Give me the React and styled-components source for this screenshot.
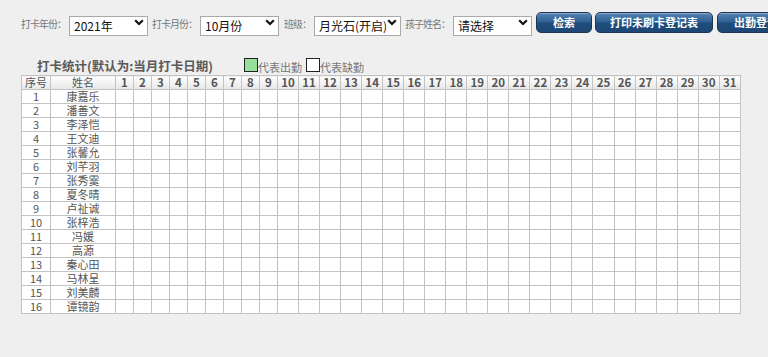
import React from "react";
import styled, { createGlobalStyle } from "styled-components";

const Global = createGlobalStyle`
  html, body { margin: 0; padding: 0; background: #efefef; }
  body { font-family: "Noto Sans CJK SC", "Liberation Sans", sans-serif; }
`;

const Page = styled.div`
  width: 768px;
  height: 357px;
  overflow: hidden;
  background: #efefef;
`;

const Toolbar = styled.div`
  display: flex;
  align-items: center;
  padding: 12px 0 0 21px;
  height: 20px;
  white-space: nowrap;
`;

const Label = styled.span`
  flex: none;
  font-size: 10px;
  letter-spacing: -1px;
  color: #777;
  line-height: 12px;
  margin: 3px 3px 0 ${(p) => p.$gap || 0}px;
`;

const SelectWrap = styled.div`
  position: relative;
  width: ${(p) => p.$w}px;
  height: 20px;
  flex: none;
`;

const Select = styled.select`
  appearance: none;
  -webkit-appearance: none;
  width: 100%;
  height: 100%;
  box-sizing: border-box;
  border: 1px solid #a9a9a9;
  background: #fff;
  font-family: "Noto Sans CJK SC", "Liberation Sans", sans-serif;
  font-size: 12px;
  color: #111;
  padding: 0 8px 0 4px;
  line-height: 18px;
  border-radius: 0;
  outline: none;
`;

const Chevron = styled.svg`
  position: absolute;
  right: 4px;
  top: 7px;
  width: 10px;
  height: 7px;
  pointer-events: none;
`;

const Button = styled.button`
  flex: none;
  height: 21px;
  width: ${(p) => p.$w}px;
  margin-left: ${(p) => p.$gap}px;
  border: 1px solid #1b3553;
  border-radius: 5px;
  background: linear-gradient(#5585b3 0%, #2f6092 45%, #1f4c7a 55%, #1d4775 100%);
  box-shadow: inset 0 1px 0 rgba(255, 255, 255, 0.3);
  color: #fff;
  font-family: "Noto Sans CJK SC", "Liberation Sans", sans-serif;
  font-size: 11px;
  font-weight: bold;
  padding: 0;
  line-height: 19px;
  white-space: nowrap;
  overflow: hidden;
  text-align: ${(p) => (p.$cut ? "left" : "center")};
  padding-left: ${(p) => (p.$cut ? 16 : 0)}px;
`;

const TitleRow = styled.div`
  display: flex;
  align-items: flex-end;
  margin-top: 26px;
  padding-left: 37px;
  height: 16px;
`;

const Title = styled.div`
  font-size: 12.5px;
  font-weight: bold;
  color: #5a5a5a;
  line-height: 16px;
  margin-right: 31px;
`;

const LegendItem = styled.div`
  display: flex;
  align-items: flex-end;
  margin-right: 4px;
`;

const Swatch = styled.span`
  display: inline-block;
  width: 12px;
  height: 12px;
  border: 1px solid #222;
  background: ${(p) => p.$color};
  margin-bottom: 2px;
`;

const LegendText = styled.span`
  font-size: 11px;
  color: #777;
  line-height: 13px;
`;

const Table = styled.table`
  margin: 1px 0 0 21px;
  border-collapse: collapse;
  table-layout: fixed;
  width: 720px;
  background: #fff;
`;

const Th = styled.th`
  height: 13px;
  padding: 0;
  border: 1px solid #c3c3c3;
  background: linear-gradient(#ffffff, #e6e6e6);
  font-size: ${(p) => (p.$cn ? 11 : 11.5)}px;
  font-weight: ${(p) => (p.$cn ? "normal" : "bold")};
  color: #555;
  line-height: 13px;
  text-align: center;
  overflow: hidden;
  white-space: nowrap;
`;

const Td = styled.td`
  height: 13px;
  padding: 0;
  border: 1px solid #c3c3c3;
  font-size: 11px;
  color: #555;
  line-height: 13px;
  text-align: center;
  overflow: hidden;
  white-space: nowrap;
`;

const names = [
  "康嘉乐", "潘善文", "李泽恺", "王文迪", "张馨允", "刘芊羽", "张秀霙", "夏冬晴",
  "卢祉诚", "张梓浩", "冯媛", "高源", "秦心田", "马林呈", "刘美麟", "谭镜韵",
];
const days = Array.from({ length: 31 }, (_, i) => i + 1);

const Chev = () => (
  <Chevron viewBox="0 0 10 7">
    <path d="M1.2 1.2 L5 5 L8.8 1.2" fill="none" stroke="#111" strokeWidth="2.2" />
  </Chevron>
);

const Sel = ({ w, value, options }) => (
  <SelectWrap $w={w}>
    <Select defaultValue={value}>
      {options.map((o) => (
        <option key={o}>{o}</option>
      ))}
    </Select>
    <Chev />
  </SelectWrap>
);

export default function App() {
  return (
    <Page>
      <Global />
      <Toolbar>
        <Label>打卡年份：</Label>
        <Sel w={79} value="2021年" options={["2020年", "2021年", "2022年"]} />
        <Label $gap={4}>打卡月份：</Label>
        <Sel w={79} value="10月份" options={["9月份", "10月份", "11月份"]} />
        <Label $gap={5}>班级：</Label>
        <Sel w={87} value="月光石(开启)" options={["月光石(开启)"]} />
        <Label $gap={4}>孩子姓名：</Label>
        <Sel w={79} value="请选择" options={["请选择", ...names]} />
        <Button $w={56} $gap={4}>检索</Button>
        <Button $w={118} $gap={3}>打印未刷卡登记表</Button>
        <Button $w={70} $gap={4} $cut>出勤登记表</Button>
      </Toolbar>
      <TitleRow>
        <Title>打卡统计(默认为:当月打卡日期)</Title>
        <LegendItem>
          <Swatch $color="#97e09a" />
          <LegendText>代表出勤</LegendText>
        </LegendItem>
        <LegendItem>
          <Swatch $color="#fff" />
          <LegendText>代表缺勤</LegendText>
        </LegendItem>
      </TitleRow>
      <Table>
        <colgroup>
          <col style={{ width: 29 }} />
          <col style={{ width: 65 }} />
          {days.map((d) => (
            <col key={d} style={d < 10 ? { width: 18 } : undefined} />
          ))}
        </colgroup>
        <thead>
          <tr>
            <Th $cn>序号</Th>
            <Th $cn>姓名</Th>
            {days.map((d) => (
              <Th key={d}>{d}</Th>
            ))}
          </tr>
        </thead>
        <tbody>
          {names.map((n, i) => (
            <tr key={n}>
              <Td>{i + 1}</Td>
              <Td>{n}</Td>
              {days.map((d) => (
                <Td key={d} />
              ))}
            </tr>
          ))}
        </tbody>
      </Table>
    </Page>
  );
}
